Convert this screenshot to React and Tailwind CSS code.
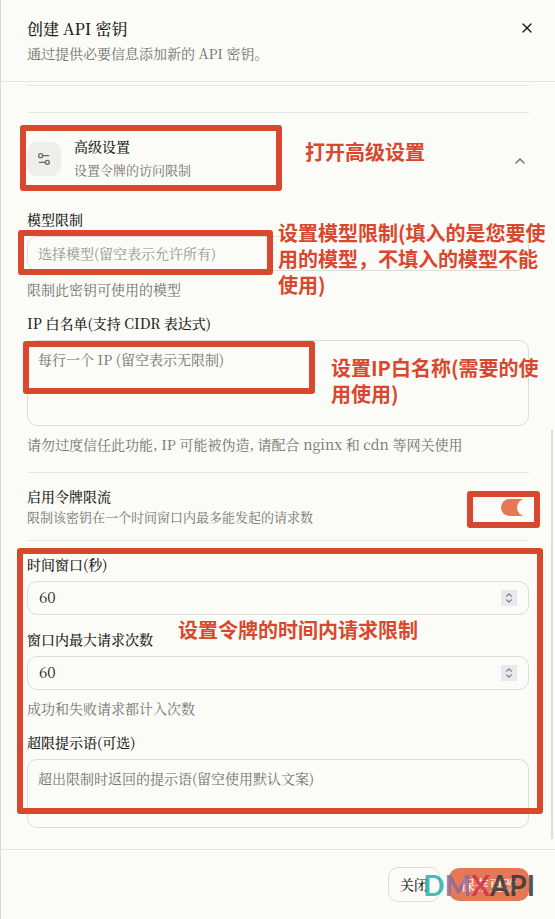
import { useState } from 'react';
import { ChevronDown, ChevronUp, Settings2, X } from 'lucide-react';

const inputBox = 'w-full rounded-[10px] border border-[#dcddd8] bg-transparent';

const Frame = ({ className }) => (
  <div aria-hidden="true" className={`pointer-events-none absolute rounded-[3px] border-6 border-[#d8472e] ${className}`} />
);

const Note = ({ className, children }) => (
  <p
    className={`pointer-events-none absolute font-['Noto_Sans_CJK_SC',sans-serif] text-[20px] leading-[26px] font-bold whitespace-nowrap text-[#d8472e] ${className}`}
  >
    {children}
  </p>
);

const Label = ({ htmlFor, children }) => (
  <label htmlFor={htmlFor} className="block pb-0.5 text-[14px] leading-[18px] font-medium text-[#1c1c1a]">
    {children}
  </label>
);

const Hint = ({ children }) => <p className="mt-2 text-[14px] leading-5 text-[#73736e]">{children}</p>;

const NumberField = ({ id, label, value, onChange, hint }) => (
  <div>
    <Label htmlFor={id}>{label}</Label>
    <div className={`mt-1.5 flex h-[34px] items-center pr-[11px] pl-[11px] ${inputBox}`}>
      <input
        id={id}
        type="number"
        value={value}
        onChange={(e) => onChange(Number(e.target.value))}
        className="min-w-0 flex-1 appearance-none bg-transparent pb-0.5 text-[15px] leading-5 text-[#1c1c1a] outline-none [-moz-appearance:textfield] [&::-webkit-inner-spin-button]:appearance-none"
      />
      <span className="flex h-4 w-4 flex-col items-center justify-between bg-[#e9e8ed] py-[3px] text-[#77777f]">
        <button type="button" aria-label="增加" onClick={() => onChange(value + 1)}>
          <ChevronUp className="h-1 w-2" viewBox="4 7 16 10" strokeWidth={3} />
        </button>
        <button type="button" aria-label="减少" onClick={() => onChange(value - 1)}>
          <ChevronDown className="h-1 w-2" viewBox="4 7 16 10" strokeWidth={3} />
        </button>
      </span>
    </div>
    {hint && <Hint>{hint}</Hint>}
  </div>
);

const Watermark = () => (
  <div
    aria-hidden="true"
    className="pointer-events-none absolute top-[17px] right-5 font-['Lato',sans-serif] text-[28px] leading-9 font-bold opacity-85"
  >
    <span className="text-[#29b0aa]">D</span>
    <span className="text-[#8b6ba0]">M</span>
    <span className="text-[#d5304f]">X</span>
    <span className="text-[#343838]">API</span>
  </div>
);

const App = () => {
  const [limited, setLimited] = useState(true);
  const [seconds, setSeconds] = useState(60);
  const [requests, setRequests] = useState(60);

  return (
    <div
      lang="zh-CN"
      className="relative flex min-h-screen flex-col border-l border-[#d9d9d6] bg-[#fbfbf7] font-['Noto_Serif_CJK_SC','Liberation_Serif','Noto_Sans_CJK_SC',serif] text-[#1c1c1a]"
    >
      <header className="flex items-start justify-between border-b border-[#e4e5e1] pt-[17px] pr-5 pb-[18px] pl-[26px]">
        <div>
          <h1 className="text-[16px] leading-6 font-medium">创建 API 密钥</h1>
          <p className="mt-0.5 text-[14px] leading-5 text-[#73736e]">通过提供必要信息添加新的 API 密钥。</p>
        </div>
        <button type="button" aria-label="关闭窗口" className="mt-[3px]">
          <X className="h-4 w-4" />
        </button>
      </header>

      <main className="relative flex-1 px-[26px] pt-[3px] pb-[21px]">
        <div className="h-7 border-y border-[#e7e8e4]" />

        {/* Advanced settings */}
        <section className="relative">
          <button type="button" aria-expanded="true" className="flex w-full items-center pt-6 text-left">
            <span className="flex h-[34px] w-[34px] items-center justify-center rounded-[10px] bg-[#eeeeea] text-[#6b6b66]">
              <Settings2 className="h-4 w-4" />
            </span>
            <span className="ml-[13px] flex-1">
              <span className="block text-[14px] leading-[18px] font-medium">高级设置</span>
              <span className="mt-[5px] block text-[13px] leading-5 text-[#73736e]">设置令牌的访问限制</span>
            </span>
            <ChevronUp className="mt-1 mr-px h-4 w-4 text-[#6b6b66]" />
          </button>
          <Frame className="top-3 -left-[7px] h-[66px] w-[262px]" />
          <Note className="top-[26px] left-[278px]">打开高级设置</Note>
        </section>

        <section className="relative mt-[30px]">
          <Label htmlFor="models">模型限制</Label>
          <input
            id="models"
            type="text"
            placeholder="选择模型(留空表示允许所有)"
            className={`mt-1.5 block h-[35px] px-[10px] pb-0.5 text-[14px] outline-none placeholder:text-[#969691] ${inputBox}`}
          />
          <Hint>限制此密钥可使用的模型</Hint>
          <Frame className="top-5 -left-[9px] h-[45px] w-[255px]" />
          <Note className="top-[10px] left-[251px]">
            设置模型限制(填入的是您要使
            <br />
            用的模型，不填入的模型不能
            <br />
            使用)
          </Note>
        </section>

        <section className="relative mt-[15px] border-b border-[#e7e8e4] pb-[18px]">
          <Label htmlFor="whitelist">IP 白名单(支持 CIDR 表达式)</Label>
          <textarea
            id="whitelist"
            placeholder="每行一个 IP (留空表示无限制)"
            className={`mt-1.5 block h-[86px] resize-none px-[10px] py-2 text-[14px] leading-5 outline-none placeholder:text-[#73736e] ${inputBox}`}
          />
          <Hint>请勿过度信任此功能, IP 可能被伪造, 请配合 nginx 和 cdn 等网关使用</Hint>
          <Frame className="top-[27px] -left-1 h-[53px] w-[292px]" />
          <Note className="top-[41px] left-[304px]">
            设置IP白名称(需要的使
            <br />
            用使用)
          </Note>
        </section>

        {/* Rate limit */}
        <section className="relative flex items-center justify-between border-b border-[#e7e8e4] pt-3.5 pb-[13px]">
          <div>
            <Label htmlFor="limit">启用令牌限流</Label>
            <p className="text-[13px] leading-5 text-[#73736e]">限制该密钥在一个时间窗口内最多能发起的请求数</p>
          </div>
          <input
            id="limit"
            type="checkbox"
            role="switch"
            checked={limited}
            onChange={(e) => setLimited(e.target.checked)}
            className="relative h-[17px] w-7 shrink-0 appearance-none rounded-full bg-[#dcddd8] before:absolute before:top-0 before:left-0 before:h-[17px] before:w-[17px] before:rounded-full before:bg-[#fbfbf7] checked:bg-[#e57856] checked:before:left-4"
          />
          <Frame className="top-[18px] -right-[11px] h-[37px] w-[73px]" />
        </section>

        <section className="relative flex flex-col gap-[15px] pt-3.5">
          <NumberField id="seconds" label="时间窗口(秒)" value={seconds} onChange={setSeconds} />
          <NumberField
            id="requests"
            label="窗口内最大请求次数"
            value={requests}
            onChange={setRequests}
            hint="成功和失败请求都计入次数"
          />
          <div>
            <Label htmlFor="message">超限提示语(可选)</Label>
            <textarea
              id="message"
              placeholder="超出限制时返回的提示语(留空使用默认文案)"
              className={`mt-1.5 block h-[69px] resize-none px-[10px] py-2 text-[14px] leading-5 outline-none placeholder:text-[#73736e] ${inputBox}`}
            />
          </div>
          <Frame className="top-[7px] -right-3.5 bottom-3.5 -left-[10px]" />
          <Note className="top-[76px] left-[151px]">设置令牌的时间内请求限制</Note>
        </section>

        <div aria-hidden="true" className="absolute right-0.5 bottom-[10px] h-[409px] w-0.5 bg-[#dcddd9]" />
      </main>

      <footer className="relative flex items-center justify-end gap-[9px] border-t border-[#e4e5e1] pt-[17px] pr-[26px] pb-[17px]">
        <button type="button" className="h-[35px] w-[52px] rounded-[10px] border border-[#dcddd8] text-[14px] font-medium">
          关闭
        </button>
        <button type="button" className="h-[33px] w-20 rounded-[10px] bg-[#e57856] text-[14px] font-medium text-[#fbfbf7]">
          保存更改
        </button>
        <Watermark />
      </footer>
    </div>
  );
};

export default App;
